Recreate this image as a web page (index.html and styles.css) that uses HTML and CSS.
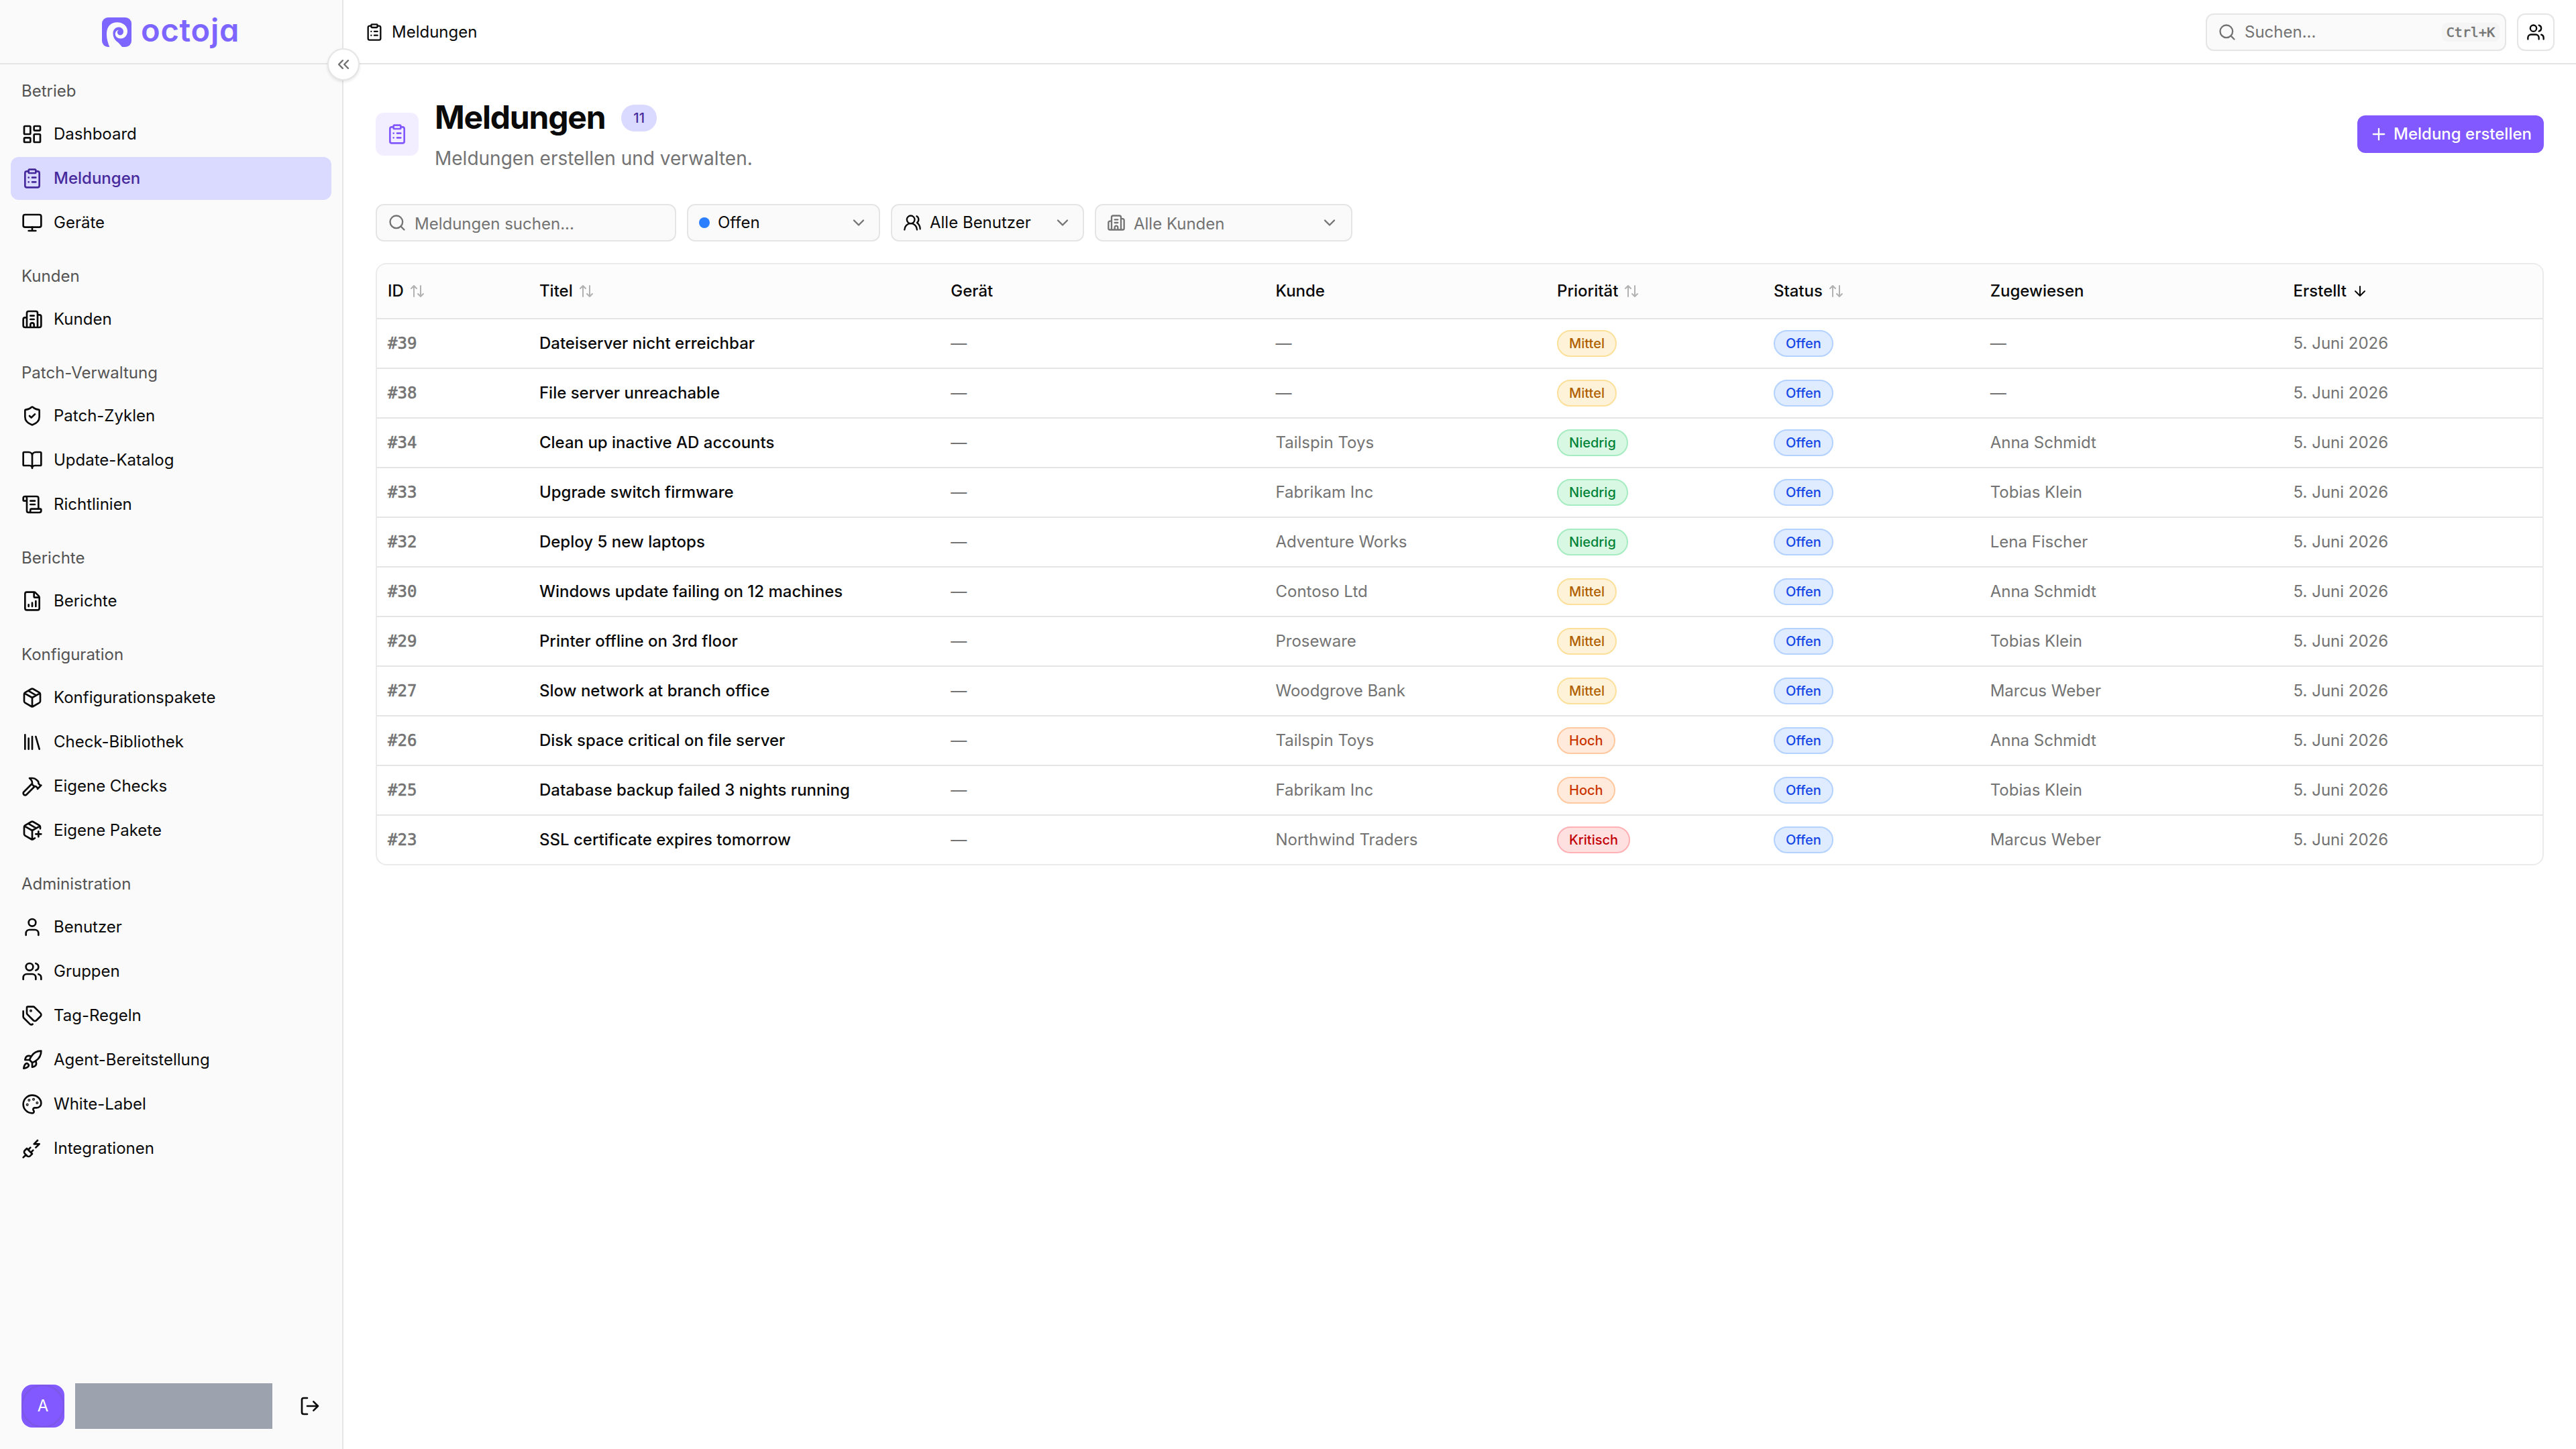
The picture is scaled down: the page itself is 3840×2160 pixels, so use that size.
FILE: index.html
```html
<!DOCTYPE html>
<html lang="de">
<head>
  <meta charset="UTF-8">
  <title>Meldungen - octoja</title>
  <link rel="stylesheet" href="styles.css">
</head>
<body>
  <!-- Icons -->
  <svg class="sprite">
    <symbol id="i-clipboard" viewBox="0 0 24 24"><rect width="8" height="4" x="8" y="2" rx="1"/><path d="M16 4h2a2 2 0 0 1 2 2v14a2 2 0 0 1-2 2H6a2 2 0 0 1-2-2V6a2 2 0 0 1 2-2h2M12 11h4M12 16h4M8 11h.01M8 16h.01"/></symbol>
    <symbol id="i-dashboard" viewBox="0 0 24 24"><rect width="7" height="9" x="3" y="3" rx="1"/><rect width="7" height="5" x="14" y="3" rx="1"/><rect width="7" height="9" x="14" y="12" rx="1"/><rect width="7" height="5" x="3" y="16" rx="1"/></symbol>
    <symbol id="i-monitor" viewBox="0 0 24 24"><rect width="20" height="14" x="2" y="3" rx="2"/><path d="M8 21h8M12 17v4"/></symbol>
    <symbol id="i-building" viewBox="0 0 24 24"><path d="M10 12h4M10 8h4M14 21v-3a2 2 0 0 0-4 0v3M6 10H4a2 2 0 0 0-2 2v7a2 2 0 0 0 2 2h16a2 2 0 0 0 2-2V9a2 2 0 0 0-2-2h-2M6 21V5a2 2 0 0 1 2-2h8a2 2 0 0 1 2 2v16"/></symbol>
    <symbol id="i-shield" viewBox="0 0 24 24"><path d="M20 13c0 5-3.5 7.5-7.66 8.95a1 1 0 0 1-.67-.01C7.5 20.5 4 18 4 13V6a1 1 0 0 1 1-1c2 0 4.5-1.2 6.24-2.72a1.17 1.17 0 0 1 1.52 0C14.51 3.81 17 5 19 5a1 1 0 0 1 1 1zM9 12l2 2 4-4"/></symbol>
    <symbol id="i-book" viewBox="0 0 24 24"><path d="M12 7v14M3 18a1 1 0 0 1-1-1V4a1 1 0 0 1 1-1h5a4 4 0 0 1 4 4 4 4 0 0 1 4-4h5a1 1 0 0 1 1 1v13a1 1 0 0 1-1 1h-6a3 3 0 0 0-3 3 3 3 0 0 0-3-3z"/></symbol>
    <symbol id="i-scroll" viewBox="0 0 24 24"><path d="M15 12h-5M15 8h-5M19 17V5a2 2 0 0 0-2-2H4M8 21h12a2 2 0 0 0 2-2v-1a1 1 0 0 0-1-1H11a1 1 0 0 0-1 1v1a2 2 0 1 1-4 0V5a2 2 0 1 0-4 0v2a1 1 0 0 0 1 1h3"/></symbol>
    <symbol id="i-report" viewBox="0 0 24 24"><path d="M6 22a2 2 0 0 1-2-2V4a2 2 0 0 1 2-2h8a2.4 2.4 0 0 1 1.704.706l3.588 3.588A2.4 2.4 0 0 1 20 8v12a2 2 0 0 1-2 2zM14 2v5a1 1 0 0 0 1 1h5M8 18v-2M12 18v-4M16 18v-6"/></symbol>
    <symbol id="i-package" viewBox="0 0 24 24"><path d="M11 21.73a2 2 0 0 0 2 0l7-4A2 2 0 0 0 21 16V8a2 2 0 0 0-1-1.73l-7-4a2 2 0 0 0-2 0l-7 4A2 2 0 0 0 3 8v8a2 2 0 0 0 1 1.73zM12 22V12M3.29 7 12 12l8.71-5M7.5 4.27l9 5.15"/></symbol>
    <symbol id="i-library" viewBox="0 0 24 24"><path d="m16 6 4 14M12 6v14M8 8v12M4 4v16"/></symbol>
    <symbol id="i-hammer" viewBox="0 0 24 24"><path d="m15 12-9.373 9.373a1 1 0 0 1-3.001-3L12 9M18 15l4-4M21.5 11.5l-1.914-1.914A2 2 0 0 1 19 8.172v-.344a2 2 0 0 0-.586-1.414l-1.657-1.657A6 6 0 0 0 12.516 3H9l1.243 1.243A6 6 0 0 1 12 8.485V10l2 2h1.172a2 2 0 0 1 1.414.586L18.5 14.5"/></symbol>
    <symbol id="i-package-plus" viewBox="0 0 24 24"><path d="M16 16h6M19 13v6M21 10V8a2 2 0 0 0-1-1.73l-7-4a2 2 0 0 0-2 0l-7 4A2 2 0 0 0 3 8v8a2 2 0 0 0 1 1.73l7 4a2 2 0 0 0 2 0l2-1.14M7.5 4.27l9 5.15M3.29 7 12 12l8.71-5M12 22V12"/></symbol>
    <symbol id="i-user" viewBox="0 0 24 24"><path d="M19 21v-2a4 4 0 0 0-4-4H9a4 4 0 0 0-4 4v2"/><circle cx="12" cy="7" r="4"/></symbol>
    <symbol id="i-users" viewBox="0 0 24 24"><path d="M16 21v-2a4 4 0 0 0-4-4H6a4 4 0 0 0-4 4v2M16 3.128a4 4 0 0 1 0 7.744M22 21v-2a4 4 0 0 0-3-3.87"/><circle cx="9" cy="7" r="4"/></symbol>
    <symbol id="i-users-round" viewBox="0 0 24 24"><path d="M18 21a8 8 0 0 0-16 0M22 20c0-3.37-2-6.5-4-8a5 5 0 0 0-.45-8.3"/><circle cx="10" cy="8" r="5"/></symbol>
    <symbol id="i-tags" viewBox="0 0 24 24"><path d="M13.172 2a2 2 0 0 1 1.414.586l6.71 6.71a2.4 2.4 0 0 1 0 3.408l-4.592 4.592a2.4 2.4 0 0 1-3.408 0l-6.71-6.71A2 2 0 0 1 6 9.172V3a1 1 0 0 1 1-1zM2 7v6.172a2 2 0 0 0 .586 1.414l6.71 6.71a2.4 2.4 0 0 0 3.191.193"/><circle cx="10.5" cy="6.5" r=".5" fill="currentColor"/></symbol>
    <symbol id="i-rocket" viewBox="0 0 24 24"><path d="M4.5 16.5c-1.5 1.26-2 5-2 5s3.74-.5 5-2c.71-.84.7-2.13-.09-2.91a2.18 2.18 0 0 0-2.91-.09zM12 15l-3-3a22 22 0 0 1 2-3.95A12.88 12.88 0 0 1 22 2c0 2.72-.78 7.5-6 11a22.35 22.35 0 0 1-4 2zM9 12H4s.55-3.03 2-4c1.62-1.08 5 0 5 0M12 15v5s3.03-.55 4-2c1.08-1.62 0-5 0-5"/></symbol>
    <symbol id="i-palette" viewBox="0 0 24 24"><path d="M12 22a1 1 0 0 1 0-20 10 9 0 0 1 10 9 5 5 0 0 1-5 5h-2.25a1.75 1.75 0 0 0-1.4 2.8l.3.4a1.75 1.75 0 0 1-1.4 2.8z"/><circle cx="13.5" cy="6.5" r=".5"/><circle cx="17.5" cy="10.5" r=".5"/><circle cx="6.5" cy="12.5" r=".5"/><circle cx="8.5" cy="7.5" r=".5"/></symbol>
    <symbol id="i-plug" viewBox="0 0 24 24"><path d="M6.3 20.3a2.4 2.4 0 0 0 3.4 0L12 18l-6-6-2.3 2.3a2.4 2.4 0 0 0 0 3.4ZM2 22l3-3M7.5 13.5 10 11M10.5 16.5 13 14M18 3l-4 4h6l-4 4"/></symbol>
    <symbol id="i-logout" viewBox="0 0 24 24"><path d="m16 17 5-5-5-5M21 12H9M9 21H5a2 2 0 0 1-2-2V5a2 2 0 0 1 2-2h4"/></symbol>
    <symbol id="i-collapse" viewBox="0 0 24 24"><path d="m11 17-5-5 5-5M18 17l-5-5 5-5"/></symbol>
    <symbol id="i-search" viewBox="0 0 24 24"><path d="m21 21-4.34-4.34"/><circle cx="11" cy="11" r="8"/></symbol>
    <symbol id="i-plus" viewBox="0 0 24 24"><path d="M5 12h14M12 5v14"/></symbol>
    <symbol id="i-chevron" viewBox="0 0 24 24"><path d="m6 9 6 6 6-6"/></symbol>
    <symbol id="i-sort" viewBox="0 0 24 24"><path d="m21 16-4 4-4-4M17 20V4M3 8l4-4 4 4M7 4v16"/></symbol>
    <symbol id="i-down" viewBox="0 0 24 24"><path d="M12 5v14M19 12l-7 7-7-7"/></symbol>
  </svg>

  <aside class="sidebar">
    <div class="brand">
      <svg class="brand-mark" viewBox="0 0 44 44">
        <rect class="mark-bg" width="44" height="44" rx="9"/>
        <path class="mark-curl" d="M11.5 44.5C8.5 37 6.6 31 7 23 7.5 13 14 7.3 22.5 7.3 31.500 7.300 38 13 38 20.500 38 27 33.500 31.500 28 31.500 23 31.500 19.800 28.500 19.800 24.800 19.800 21.500 22 19 25.200 18.800 23.500 19.800 22.800 21 22.900 22.500 23.100 25 25 26.600 27.500 26.400 30.200 26.200 32.100 24 32 21 31.800 17 28.500 14.400 24.700 14.500 20 14.700 16.500 18.500 16.500 23.500 16.500 29 18.500 33 23 36.500 26 39 28.500 42 30.500 44.500Z"/>
      </svg>
      <span class="brand-name">octoja</span>
    </div>

    <nav class="nav">
      <div class="nav-group">
        <div class="nav-label">Betrieb</div>
        <a class="nav-item"><svg class="icon"><use href="#i-dashboard"/></svg>Dashboard</a>
        <a class="nav-item active"><svg class="icon"><use href="#i-clipboard"/></svg>Meldungen</a>
        <a class="nav-item"><svg class="icon"><use href="#i-monitor"/></svg>Geräte</a>
      </div>
      <div class="nav-group">
        <div class="nav-label">Kunden</div>
        <a class="nav-item"><svg class="icon"><use href="#i-building"/></svg>Kunden</a>
      </div>
      <div class="nav-group">
        <div class="nav-label">Patch-Verwaltung</div>
        <a class="nav-item"><svg class="icon"><use href="#i-shield"/></svg>Patch-Zyklen</a>
        <a class="nav-item"><svg class="icon"><use href="#i-book"/></svg>Update-Katalog</a>
        <a class="nav-item"><svg class="icon"><use href="#i-scroll"/></svg>Richtlinien</a>
      </div>
      <div class="nav-group">
        <div class="nav-label">Berichte</div>
        <a class="nav-item"><svg class="icon"><use href="#i-report"/></svg>Berichte</a>
      </div>
      <div class="nav-group">
        <div class="nav-label">Konfiguration</div>
        <a class="nav-item"><svg class="icon"><use href="#i-package"/></svg>Konfigurationspakete</a>
        <a class="nav-item"><svg class="icon"><use href="#i-library"/></svg>Check-Bibliothek</a>
        <a class="nav-item"><svg class="icon"><use href="#i-hammer"/></svg>Eigene Checks</a>
        <a class="nav-item"><svg class="icon"><use href="#i-package-plus"/></svg>Eigene Pakete</a>
      </div>
      <div class="nav-group">
        <div class="nav-label">Administration</div>
        <a class="nav-item"><svg class="icon"><use href="#i-user"/></svg>Benutzer</a>
        <a class="nav-item"><svg class="icon"><use href="#i-users"/></svg>Gruppen</a>
        <a class="nav-item"><svg class="icon"><use href="#i-tags"/></svg>Tag-Regeln</a>
        <a class="nav-item"><svg class="icon"><use href="#i-rocket"/></svg>Agent-Bereitstellung</a>
        <a class="nav-item"><svg class="icon"><use href="#i-palette"/></svg>White-Label</a>
        <a class="nav-item"><svg class="icon"><use href="#i-plug"/></svg>Integrationen</a>
      </div>
    </nav>

    <div class="account">
      <div class="avatar"><span class="avatar-ring">A</span></div>
      <div class="account-name"></div>
      <svg class="icon logout"><use href="#i-logout"/></svg>
    </div>

    <div class="collapse"><svg class="icon small"><use href="#i-collapse"/></svg></div>
  </aside>

  <div class="page">
    <header class="topbar">
      <div class="crumb"><svg class="icon small"><use href="#i-clipboard"/></svg>Meldungen</div>
      <div class="topbar-actions">
        <div class="global-search">
          <svg class="icon small"><use href="#i-search"/></svg>
          <span>Suchen...</span>
          <kbd>Ctrl+K</kbd>
        </div>
        <div class="icon-button"><svg class="icon small"><use href="#i-users"/></svg></div>
      </div>
    </header>

    <main class="content">
      <div class="page-head">
        <div class="page-icon"><svg class="icon"><use href="#i-clipboard"/></svg></div>
        <div class="page-title">
          <div class="title-row">
            <h1>Meldungen</h1>
            <span class="count">11</span>
          </div>
          <p>Meldungen erstellen und verwalten.</p>
        </div>
        <div class="button-primary"><svg class="icon small"><use href="#i-plus"/></svg>Meldung erstellen</div>
      </div>

      <div class="filters">
        <div class="field search"><svg class="icon small"><use href="#i-search"/></svg><span class="placeholder">Meldungen suchen...</span></div>
        <div class="field select"><span class="dot"></span><span>Offen</span><svg class="icon small chevron"><use href="#i-chevron"/></svg></div>
        <div class="field select"><svg class="icon small"><use href="#i-users-round"/></svg><span>Alle Benutzer</span><svg class="icon small chevron"><use href="#i-chevron"/></svg></div>
        <div class="field combo"><svg class="icon small"><use href="#i-building"/></svg><span class="placeholder">Alle Kunden</span><svg class="icon small chevron"><use href="#i-chevron"/></svg></div>
      </div>

      <div class="table">
        <div class="row head">
          <div>ID<svg class="icon sort"><use href="#i-sort"/></svg></div>
          <div>Titel<svg class="icon sort"><use href="#i-sort"/></svg></div>
          <div>Gerät</div>
          <div>Kunde</div>
          <div>Priorität<svg class="icon sort"><use href="#i-sort"/></svg></div>
          <div>Status<svg class="icon sort"><use href="#i-sort"/></svg></div>
          <div>Zugewiesen</div>
          <div>Erstellt<svg class="icon sort sorted"><use href="#i-down"/></svg></div>
        </div>
        <div class="row">
          <div class="id">#39</div><div class="title">Dateiserver nicht erreichbar</div><div>—</div><div>—</div>
          <div><span class="pill medium">Mittel</span></div><div><span class="pill open">Offen</span></div><div>—</div><div>5. Juni 2026</div>
        </div>
        <div class="row">
          <div class="id">#38</div><div class="title">File server unreachable</div><div>—</div><div>—</div>
          <div><span class="pill medium">Mittel</span></div><div><span class="pill open">Offen</span></div><div>—</div><div>5. Juni 2026</div>
        </div>
        <div class="row">
          <div class="id">#34</div><div class="title">Clean up inactive AD accounts</div><div>—</div><div>Tailspin Toys</div>
          <div><span class="pill low">Niedrig</span></div><div><span class="pill open">Offen</span></div><div>Anna Schmidt</div><div>5. Juni 2026</div>
        </div>
        <div class="row">
          <div class="id">#33</div><div class="title">Upgrade switch firmware</div><div>—</div><div>Fabrikam Inc</div>
          <div><span class="pill low">Niedrig</span></div><div><span class="pill open">Offen</span></div><div>Tobias Klein</div><div>5. Juni 2026</div>
        </div>
        <div class="row">
          <div class="id">#32</div><div class="title">Deploy 5 new laptops</div><div>—</div><div>Adventure Works</div>
          <div><span class="pill low">Niedrig</span></div><div><span class="pill open">Offen</span></div><div>Lena Fischer</div><div>5. Juni 2026</div>
        </div>
        <div class="row">
          <div class="id">#30</div><div class="title">Windows update failing on 12 machines</div><div>—</div><div>Contoso Ltd</div>
          <div><span class="pill medium">Mittel</span></div><div><span class="pill open">Offen</span></div><div>Anna Schmidt</div><div>5. Juni 2026</div>
        </div>
        <div class="row">
          <div class="id">#29</div><div class="title">Printer offline on 3rd floor</div><div>—</div><div>Proseware</div>
          <div><span class="pill medium">Mittel</span></div><div><span class="pill open">Offen</span></div><div>Tobias Klein</div><div>5. Juni 2026</div>
        </div>
        <div class="row">
          <div class="id">#27</div><div class="title">Slow network at branch office</div><div>—</div><div>Woodgrove Bank</div>
          <div><span class="pill medium">Mittel</span></div><div><span class="pill open">Offen</span></div><div>Marcus Weber</div><div>5. Juni 2026</div>
        </div>
        <div class="row">
          <div class="id">#26</div><div class="title">Disk space critical on file server</div><div>—</div><div>Tailspin Toys</div>
          <div><span class="pill high">Hoch</span></div><div><span class="pill open">Offen</span></div><div>Anna Schmidt</div><div>5. Juni 2026</div>
        </div>
        <div class="row">
          <div class="id">#25</div><div class="title">Database backup failed 3 nights running</div><div>—</div><div>Fabrikam Inc</div>
          <div><span class="pill high">Hoch</span></div><div><span class="pill open">Offen</span></div><div>Tobias Klein</div><div>5. Juni 2026</div>
        </div>
        <div class="row">
          <div class="id">#23</div><div class="title">SSL certificate expires tomorrow</div><div>—</div><div>Northwind Traders</div>
          <div><span class="pill critical">Kritisch</span></div><div><span class="pill open">Offen</span></div><div>Marcus Weber</div><div>5. Juni 2026</div>
        </div>
      </div>
    </main>
  </div>
</body>
</html>
```
FILE: styles.css
```css
* {
  margin: 0;
  padding: 0;
  box-sizing: border-box;
}

body {
  font-family: Inter, "Liberation Sans", sans-serif;
  font-size: 24px;
  line-height: 32px;
  color: #0a0a0a;
  background: #fff;
  height: 100vh;
  display: flex;
  overflow: hidden;
}

.sprite {
  display: none;
}

.icon {
  width: 32px;
  height: 32px;
  flex-shrink: 0;
  fill: none;
  stroke: currentColor;
  stroke-width: 2;
  stroke-linecap: round;
  stroke-linejoin: round;
}

.icon.small {
  width: 28px;
  height: 28px;
}

/* Sidebar */
.sidebar {
  position: relative;
  width: 512px;
  flex-shrink: 0;
  display: flex;
  flex-direction: column;
  background: #fafafa;
  border-right: 2px solid #e5e5e5;
}

.brand {
  height: 96px;
  padding: 2px 0 0 152px;
  display: flex;
  align-items: center;
  gap: 14px;
  border-bottom: 2px solid #e5e5e5;
}

.brand-mark {
  width: 44px;
  height: 44px;
}

.mark-bg {
  fill: #7c66ff;
}

.mark-curl {
  fill: #fafafa;
}

.brand-name {
  padding-bottom: 6px;
  font-size: 47px;
  line-height: 56px;
  font-weight: 600;
  letter-spacing: 0.8px;
  font-feature-settings: "cv11";
  color: #7c66ff;
}

.nav {
  flex: 1;
}

.nav-group {
  padding: 8px 16px;
  display: flex;
  flex-direction: column;
}

.nav-label {
  height: 64px;
  padding: 0 16px;
  display: flex;
  align-items: center;
  color: #545454;
}

.nav-item {
  height: 64px;
  padding: 0 16px;
  display: flex;
  align-items: center;
  gap: 16px;
  border-radius: 12px;
}

.nav-item + .nav-item {
  margin-top: 2px;
}

.nav-item.active {
  font-weight: 500;
  background: #dad9ff;
  color: #462a9c;
}

.account {
  padding: 0 32px 30px;
  display: flex;
  align-items: center;
  gap: 16px;
}

.avatar {
  width: 64px;
  height: 64px;
  border-radius: 16px;
  background: #8258ff;
  color: #fff;
}

.avatar-ring {
  height: 64px;
  display: flex;
  align-items: center;
  justify-content: center;
  border: 2px solid rgba(115, 90, 200, 0.5);
  border-radius: 50%;
}

.account-name {
  width: 294px;
  height: 68px;
  background: #9ca3af;
}

.logout {
  margin-left: auto;
}

.collapse {
  position: absolute;
  top: 72px;
  right: -26px;
  z-index: 1;
  width: 48px;
  height: 48px;
  display: flex;
  align-items: center;
  justify-content: center;
  color: #737373;
  background: #fff;
  border: 2px solid #e5e5e5;
  border-radius: 50%;
  box-shadow: 0 2px 4px rgba(0, 0, 0, 0.1);
}

/* Topbar */
.page {
  flex: 1;
  min-width: 0;
}

.topbar {
  height: 96px;
  padding: 2px 32px 0;
  display: flex;
  align-items: center;
  justify-content: space-between;
  border-bottom: 2px solid #e5e5e5;
}

.crumb {
  display: flex;
  align-items: center;
  gap: 12px;
}

.topbar-actions {
  display: flex;
  gap: 16px;
}

.global-search {
  width: 448px;
  height: 56px;
  padding: 0 8px 0 16px;
  display: flex;
  align-items: center;
  gap: 12px;
  color: #737373;
  background: #fafafa;
  border: 2px solid #e5e5e5;
  border-radius: 12px;
}

kbd {
  margin-left: auto;
  padding: 0 7px;
  font-family: "DejaVu Sans Mono", monospace;
  font-size: 20px;
  line-height: 28px;
  -webkit-text-stroke: 0.6px;
  background: #f5f5f5;
  border-radius: 8px;
}

.icon-button {
  width: 56px;
  height: 56px;
  display: flex;
  align-items: center;
  justify-content: center;
  border: 2px solid #e5e5e5;
  border-radius: 12px;
}

/* Page head */
.content {
  padding: 48px;
}

.page-head {
  display: flex;
  align-items: center;
  gap: 24px;
}

.page-icon {
  width: 64px;
  height: 64px;
  display: flex;
  align-items: center;
  justify-content: center;
  color: #8258ff;
  background: #f2eeff;
  border-radius: 12px;
}

.title-row {
  display: flex;
  align-items: center;
  gap: 24px;
}

h1 {
  padding-bottom: 2px;
  font-size: 48px;
  line-height: 62px;
  font-weight: 700;
  letter-spacing: -1.2px;
}

.count {
  padding: 0 18px;
  font-size: 20px;
  line-height: 40px;
  font-weight: 500;
  color: #462a9c;
  background: #dad9ff;
  border-radius: 20px;
}

.page-title p {
  margin-top: 8px;
  font-size: 28px;
  line-height: 40px;
  color: #737373;
}

.button-primary {
  height: 56px;
  margin-left: auto;
  padding: 0 18px;
  display: flex;
  align-items: center;
  gap: 8px;
  font-weight: 500;
  color: #fff;
  background: #8258ff;
  border-radius: 12px;
}

/* Filters */
.filters {
  margin-top: 48px;
  display: flex;
  gap: 16px;
}

.field {
  height: 56px;
  padding: 0 16px;
  display: flex;
  align-items: center;
  gap: 12px;
  background: #fafafa;
  border: 2px solid #e5e5e5;
  border-radius: 12px;
}

.search {
  width: 448px;
  color: #737373;
}

.select {
  width: 288px;
}

.combo {
  width: 384px;
  padding-right: 18px;
  color: #737373;
}

.placeholder {
  padding-top: 3px;
}

.dot {
  width: 16px;
  height: 16px;
  border-radius: 50%;
  background: #2b7fff;
}

.chevron {
  margin-left: auto;
  color: #737373;
}

/* Table */
.table {
  margin-top: 32px;
  border: 2px solid #ebebeb;
  border-radius: 16px;
  overflow: hidden;
}

.row {
  height: 74px;
  display: grid;
  grid-template-columns: 7% 19% 15% 13% 10% 10% 14% 12%;
  align-items: center;
  color: #737373;
  border-bottom: 2px solid #e5e5e5;
}

.row:last-child {
  height: 72px;
  border-bottom: none;
}

.row > div {
  padding: 0 16px;
  display: flex;
  align-items: center;
}

.row.head {
  height: 82px;
  font-weight: 500;
  color: #0a0a0a;
  background: #fcfcfc;
}

.sort {
  width: 24px;
  height: 24px;
  margin-left: 8px;
  opacity: 0.3;
}

.sorted {
  opacity: 1;
}

.id {
  font-family: "DejaVu Sans Mono", monospace;
  -webkit-text-stroke: 0.6px;
}

.title {
  font-weight: 500;
  color: #0a0a0a;
}

.pill {
  height: 40px;
  padding: 0 16px;
  font-size: 20px;
  line-height: 36px;
  font-weight: 500;
  border: 2px solid;
  border-radius: 20px;
}

.medium {
  color: #b06000;
  background: #fef3d9;
  border-color: #fce09a;
}

.low {
  color: #008236;
  background: #d9f8e4;
  border-color: #a5ecc0;
}

.high {
  color: #ca3500;
  background: #ffeadb;
  border-color: #ffc89e;
}

.critical {
  color: #c10007;
  background: #ffe0e1;
  border-color: #ffb0b5;
}

.open {
  color: #1447e6;
  background: #dfebff;
  border-color: #b3d2ff;
}
```
